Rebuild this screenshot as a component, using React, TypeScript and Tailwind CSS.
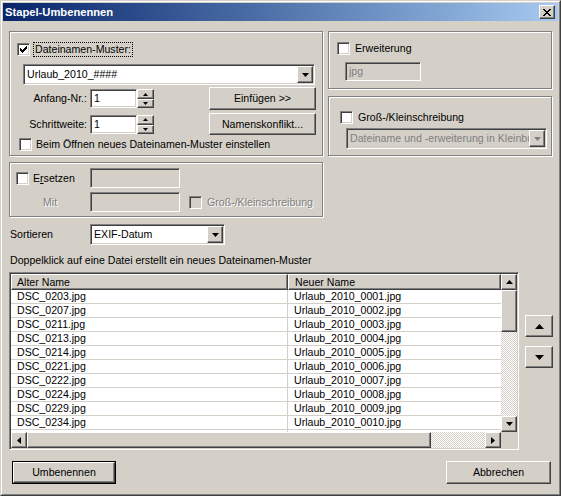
import type { ReactNode } from "react";

const raised =
  "bg-[#d4d0c8] border border-t-white border-l-white border-r-[#404040] border-b-[#404040] shadow-[inset_-1px_-1px_0_#808080]";
const sunken =
  "border border-t-[#808080] border-l-[#808080] border-r-white border-b-white shadow-[inset_1px_1px_0_#404040,inset_-1px_-1px_0_#d4d0c8]";
const etched = "border border-[#808080] shadow-[inset_1px_1px_0_#fff,1px_1px_0_#fff]";
const disabledText = "text-[#808080] [text-shadow:1px_1px_0_#fff]";
const checker =
  "bg-[image:repeating-conic-gradient(#d4d0c8_0%_25%,#fff_0%_50%)] bg-[length:2px_2px]";

const rows = [
  ["DSC_0203.jpg", "Urlaub_2010_0001.jpg"],
  ["DSC_0207.jpg", "Urlaub_2010_0002.jpg"],
  ["DSC_0211.jpg", "Urlaub_2010_0003.jpg"],
  ["DSC_0213.jpg", "Urlaub_2010_0004.jpg"],
  ["DSC_0214.jpg", "Urlaub_2010_0005.jpg"],
  ["DSC_0221.jpg", "Urlaub_2010_0006.jpg"],
  ["DSC_0222.jpg", "Urlaub_2010_0007.jpg"],
  ["DSC_0224.jpg", "Urlaub_2010_0008.jpg"],
  ["DSC_0229.jpg", "Urlaub_2010_0009.jpg"],
  ["DSC_0234.jpg", "Urlaub_2010_0010.jpg"],
  ["", ""],
];

function Arrow({
  dir,
  w = 7,
  h = 4,
  color = "#000",
}: {
  dir: "up" | "down" | "left" | "right";
  w?: number;
  h?: number;
  color?: string;
}) {
  const vertical = dir === "up" || dir === "down";
  const W = vertical ? w : h;
  const H = vertical ? h : w;
  const points =
    dir === "down"
      ? `0,0 ${w},0 ${w / 2},${h}`
      : dir === "up"
      ? `0,${h} ${w},${h} ${w / 2},0`
      : dir === "left"
      ? `${h},0 ${h},${w} 0,${w / 2}`
      : `0,0 0,${w} ${h},${w / 2}`;
  return (
    <svg width={W} height={H} viewBox={`0 0 ${W} ${H}`} className="block">
      <polygon points={points} fill={color} />
    </svg>
  );
}

function CheckBox({ checked, disabled }: { checked?: boolean; disabled?: boolean }) {
  return (
    <span
      className={`${sunken} flex h-[13px] w-[13px] shrink-0 items-center justify-center ${
        disabled ? "bg-[#d4d0c8]" : "bg-white"
      }`}
    >
      {checked ? (
        <svg width="7" height="7" viewBox="0 0 7 7" shapeRendering="crispEdges">
          <path
            d="M6 0h1v1h-1z M5 1h2v1h-2z M0 2h1v1h-1z M4 2h3v1h-3z M0 3h2v1h-2z M3 3h3v1h-3z M0 4h5v1h-5z M1 5h3v1h-3z M2 6h1v1h-1z"
            fill="#000"
          />
        </svg>
      ) : null}
    </span>
  );
}

function Combo({
  value,
  className = "",
  disabled,
}: {
  value: string;
  className?: string;
  disabled?: boolean;
}) {
  return (
    <div
      className={`${sunken} flex h-[21px] items-center p-[1px] ${
        disabled ? "bg-[#d4d0c8] text-[#808080]" : "bg-white"
      } ${className}`}
    >
      <span className="flex-1 overflow-hidden whitespace-nowrap pl-[2px]">{value}</span>
      <span className={`${raised} flex h-[17px] w-[16px] shrink-0 items-center justify-center`}>
        <Arrow dir="down" color={disabled ? "#808080" : "#000"} />
      </span>
    </div>
  );
}

function TextField({
  value = "",
  className = "",
  disabled,
}: {
  value?: string;
  className?: string;
  disabled?: boolean;
}) {
  return (
    <div
      className={`${sunken} flex items-center px-[3px] ${
        disabled ? "bg-[#d4d0c8] text-[#808080]" : "bg-white"
      } ${className}`}
    >
      {value}
    </div>
  );
}

function Spinner() {
  return (
    <div className="flex h-[19px] w-[17px] flex-col">
      <span className={`${raised} flex h-[10px] items-center justify-center`}>
        <Arrow dir="up" w={5} h={3} />
      </span>
      <span className={`${raised} flex h-[9px] items-center justify-center`}>
        <Arrow dir="down" w={5} h={3} />
      </span>
    </div>
  );
}

function Button({ children, className = "" }: { children: ReactNode; className?: string }) {
  return (
    <div className={`${raised} flex items-center justify-center ${className}`}>{children}</div>
  );
}

function ListView() {
  return (
    <div className={`${sunken} h-[178px] w-[510px] bg-white p-[1px]`}>
      <div className="flex h-full flex-col">
        <div className="flex h-[158px]">
          <div className="flex flex-1 flex-col overflow-hidden">
            <div className="flex h-[16px] shrink-0">
              <div className={`${raised} flex w-[277px] items-center pl-[5px]`}>Alter Name</div>
              <div className={`${raised} flex flex-1 items-center pl-[6px]`}>Neuer Name</div>
            </div>
            {rows.map(([oldName, newName], i) => (
              <div key={i} className="flex h-[14px] shrink-0 border-b border-[#d4d0c8] leading-[13px]">
                <div className="w-[277px] border-r border-[#d4d0c8] pl-[6px]">{oldName}</div>
                <div className="flex-1 pl-[6px]">{newName}</div>
              </div>
            ))}
          </div>
          <div className="flex w-[16px] flex-col">
            <span className={`${raised} flex h-[16px] items-center justify-center`}>
              <Arrow dir="up" />
            </span>
            <span className={`${raised} h-[42px]`} />
            <span className={`flex-1 ${checker}`} />
            <span className={`${raised} flex h-[16px] items-center justify-center`}>
              <Arrow dir="down" />
            </span>
          </div>
        </div>
        <div className="flex h-[16px]">
          <span className={`${raised} flex w-[16px] items-center justify-center`}>
            <Arrow dir="left" />
          </span>
          <span className={`${raised} w-[404px]`} />
          <span className={`flex-1 ${checker}`} />
          <span className={`${raised} flex w-[16px] items-center justify-center`}>
            <Arrow dir="right" />
          </span>
          <span className="w-[16px] bg-[#d4d0c8]" />
        </div>
      </div>
    </div>
  );
}

export default function App() {
  return (
    <div className="h-[496px] w-[561px] border border-t-[#d4d0c8] border-l-[#d4d0c8] border-r-[#404040] border-b-[#404040] bg-[#d4d0c8] font-['Liberation_Sans',Arial,sans-serif] text-[10.6px] leading-[13px] text-black">
      <div className="h-full border border-t-white border-l-white border-r-[#808080] border-b-[#808080] p-[1px]">
        {/* title bar */}
        <div className="flex h-[18px] items-center bg-gradient-to-r from-[#0a246a] to-[#a6caf0] pl-[2px] pr-[3px]">
          <span className="flex-1 text-[11.2px] font-bold text-white">Stapel-Umbenennen</span>
          <span className={`${raised} flex h-[14px] w-[16px] items-center justify-center`}>
            <svg width="8" height="7" viewBox="0 0 8 7" shapeRendering="crispEdges">
              <path
                d="M0 0h2v1h-2z M6 0h2v1h-2z M1 1h2v1h-2z M5 1h2v1h-2z M2 2h4v1h-4z M3 3h2v1h-2z M2 4h4v1h-4z M1 5h2v1h-2z M5 5h2v1h-2z M0 6h2v1h-2z M6 6h2v1h-2z"
                fill="#000"
              />
            </svg>
          </span>
        </div>

        <div className="pl-[6px] pr-[5px]">
          {/* top section */}
          <div className="mt-[10px] flex gap-[5px]">
            <div className={`${etched} flex h-[125px] w-[314px] flex-col`}>
              <div className="ml-[7px] mt-[10px] flex h-[15px] items-center">
                <CheckBox checked />
                <span className="ml-[3px] border border-dotted border-black px-[1px] leading-[13px]">
                  Dateinamen-Muster:
                </span>
              </div>
              <Combo value="Urlaub_2010_####" className="ml-[13px] mt-[7px] w-[292px]" />
              <div className="mt-[2px] flex h-[23px] items-center">
                <span className="w-[77px] text-right">Anfang-Nr.:</span>
                <TextField value="1" className="ml-[3px] h-[19px] w-[47px]" />
                <Spinner />
                <Button className="ml-[55px] h-[23px] w-[107px]">Einfügen &gt;&gt;</Button>
              </div>
              <div className="mt-[3px] flex h-[22px] items-center">
                <span className="w-[77px] text-right">Schrittweite:</span>
                <TextField value="1" className="ml-[3px] h-[19px] w-[47px]" />
                <Spinner />
                <Button className="ml-[55px] h-[22px] w-[107px]">Namenskonflikt...</Button>
              </div>
              <div className="ml-[9px] mt-[3px] flex h-[13px] items-center">
                <CheckBox />
                <span className="ml-[4px]">Beim Öffnen neues Dateinamen-Muster einstellen</span>
              </div>
            </div>

            <div className="flex w-[224px] flex-col gap-[7px]">
              <div className={`${etched} flex h-[58px] flex-col`}>
                <div className="ml-[8px] mt-[9px] flex h-[14px] items-center">
                  <CheckBox />
                  <span className="ml-[5px]">Erweiterung</span>
                </div>
                <TextField value="jpg" disabled className="ml-[16px] mt-[7px] h-[19px] w-[76px]" />
              </div>
              <div className={`${etched} flex h-[60px] flex-col`}>
                <div className="ml-[11px] mt-[13px] flex h-[14px] items-center">
                  <CheckBox />
                  <span className="ml-[5px]">Groß-/Kleinschreibung</span>
                </div>
                <Combo
                  value="Dateiname und -erweiterung in Kleinbuchstaben"
                  disabled
                  className="ml-[17px] mt-[4px] w-[201px]"
                />
              </div>
            </div>
          </div>

          {/* replace group */}
          <div className={`${etched} mt-[6px] flex h-[55px] w-[314px] flex-col`}>
            <div className="mt-[5px] flex h-[20px] items-center">
              <div className="flex w-[80px] items-center pl-[6px]">
                <CheckBox />
                <span className="ml-[4px]">
                  E<span className="underline">r</span>setzen
                </span>
              </div>
              <TextField disabled className="h-[20px] w-[90px]" />
            </div>
            <div className="mt-[4px] flex h-[20px] items-center">
              <span className={`w-[80px] pl-[33px] ${disabledText}`}>Mit</span>
              <TextField disabled className="h-[20px] w-[90px]" />
              <span className="ml-[9px]">
                <CheckBox disabled />
              </span>
              <span className={`ml-[5px] ${disabledText}`}>Groß-/Kleinschreibung</span>
            </div>
          </div>

          {/* sort */}
          <div className="mt-[7px] flex h-[21px] items-center">
            <span className="w-[81px] pl-[1px]">Sortieren</span>
            <Combo value="EXIF-Datum" className="w-[135px]" />
          </div>

          <div className="mt-[9px] pl-[1px]">
            Doppelklick auf eine Datei erstellt ein neues Dateinamen-Muster
          </div>

          {/* list + move buttons */}
          <div className="mt-[5px] flex">
            <ListView />
            <div className="ml-[6px] mt-[43px] flex flex-col gap-[9px]">
              <Button className="h-[22px] w-[28px]">
                <Arrow dir="up" w={9} h={5} />
              </Button>
              <Button className="h-[22px] w-[28px]">
                <Arrow dir="down" w={9} h={5} />
              </Button>
            </div>
          </div>

          {/* footer buttons */}
          <div className="mt-[11px] flex justify-between pl-[3px] pr-[2px]">
            <div className="border border-black">
              <Button className="h-[21px] w-[102px]">Umbenennen</Button>
            </div>
            <Button className="h-[23px] w-[105px]">Abbrechen</Button>
          </div>
        </div>
      </div>
    </div>
  );
}
